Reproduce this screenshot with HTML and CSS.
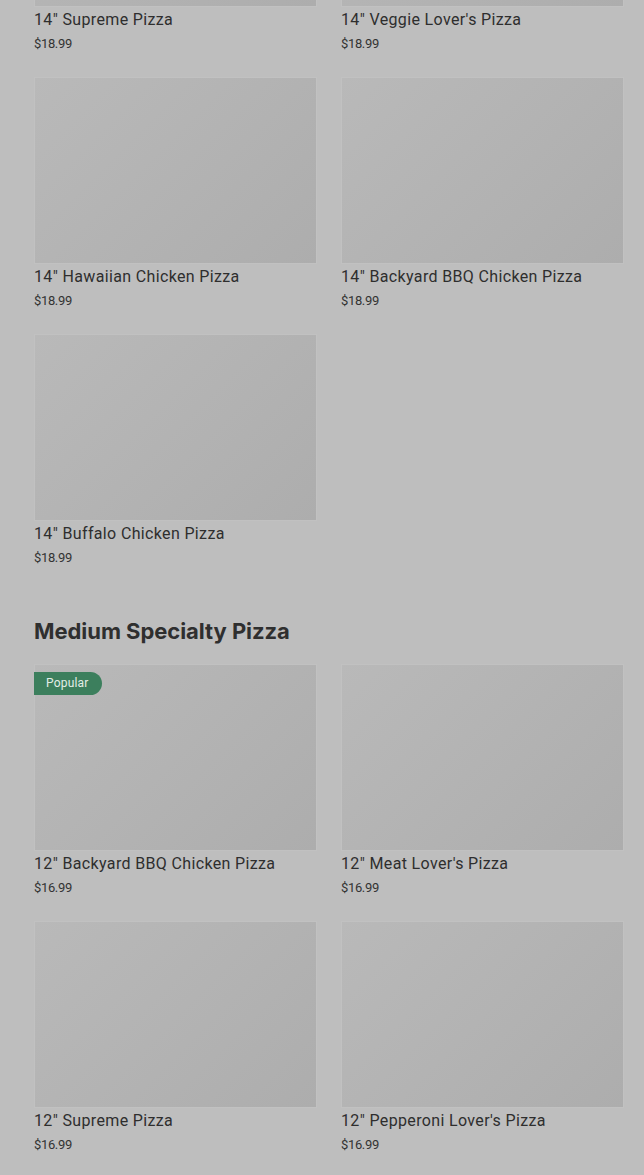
FILE: index.html
```html
<!DOCTYPE html>
<html lang="en">
<head>
  <meta charset="UTF-8" />
  <meta name="viewport" content="width=device-width, initial-scale=1.0"/>
  <title>Menu</title>
  <link rel="stylesheet" href="styles.css">
</head>
<body>
  <main class="menu">
    <section class="category">
      <div class="grid">
        <div class="card"><div class="thumb"></div><h3>14" Supreme Pizza</h3><p class="price">$18.99</p></div>
        <div class="card"><div class="thumb"></div><h3>14" Veggie Lover's Pizza</h3><p class="price">$18.99</p></div>
        <div class="card"><div class="thumb"></div><h3>14" Hawaiian Chicken Pizza</h3><p class="price">$18.99</p></div>
        <div class="card"><div class="thumb"></div><h3>14" Backyard BBQ Chicken Pizza</h3><p class="price">$18.99</p></div>
        <div class="card"><div class="thumb"></div><h3>14" Buffalo Chicken Pizza</h3><p class="price">$18.99</p></div>
      </div>
    </section>

    <section class="category">
      <h2>Medium Specialty Pizza</h2>
      <div class="grid">
        <div class="card"><div class="thumb"><span class="badge">Popular</span></div><h3>12" Backyard BBQ Chicken Pizza</h3><p class="price">$16.99</p></div>
        <div class="card"><div class="thumb"></div><h3>12" Meat Lover's Pizza</h3><p class="price">$16.99</p></div>
        <div class="card"><div class="thumb"></div><h3>12" Supreme Pizza</h3><p class="price">$16.99</p></div>
        <div class="card"><div class="thumb"></div><h3>12" Pepperoni Lover's Pizza</h3><p class="price">$16.99</p></div>
      </div>
    </section>
  </main>
</body>
</html>
```
FILE: styles.css
```css
body {
  margin: 0;
  background: #bebebe;
  color: #333;
  font-family: Roboto, 'Liberation Sans', sans-serif;
  overflow: hidden;
}
.menu {
  margin-top: -180px;
  padding: 0 20px 40px 34px;
}
.category + .category {
  margin-top: 50px;
}
h2 {
  margin: 0 0 19px;
  font-family: Inter, 'Liberation Sans', sans-serif;
  font-size: 22px;
  line-height: 28px;
  font-weight: 700;
  letter-spacing: -0.05px;
  color: #2f2f2f;
}
.grid {
  display: grid;
  grid-template-columns: 1fr 1fr;
  column-gap: 24px;
  row-gap: 24px;
}
.thumb {
  position: relative;
  height: 187px;
  box-sizing: border-box;
  border: 1px solid #c1c1c1;
  background: linear-gradient(135deg, #b9b9b9, #adadad);
}
.card h3 {
  margin: 3px 0 0;
  font-size: 16px;
  line-height: 20px;
  font-weight: 400;
  letter-spacing: 0.35px;
  color: #2e2e2e;
}
.price {
  margin: 5px 0 0;
  font-size: 13px;
  line-height: 18px;
  letter-spacing: -0.35px;
  color: #333;
}
.badge {
  position: absolute;
  top: 7px;
  left: -1px;
  height: 23px;
  line-height: 23px;
  padding: 0 13px 0 12px;
  border-radius: 0 12px 12px 0;
  background: #3c7f5d;
  color: #e3ede7;
  font-size: 12px;
  letter-spacing: 0.2px;
}
```
